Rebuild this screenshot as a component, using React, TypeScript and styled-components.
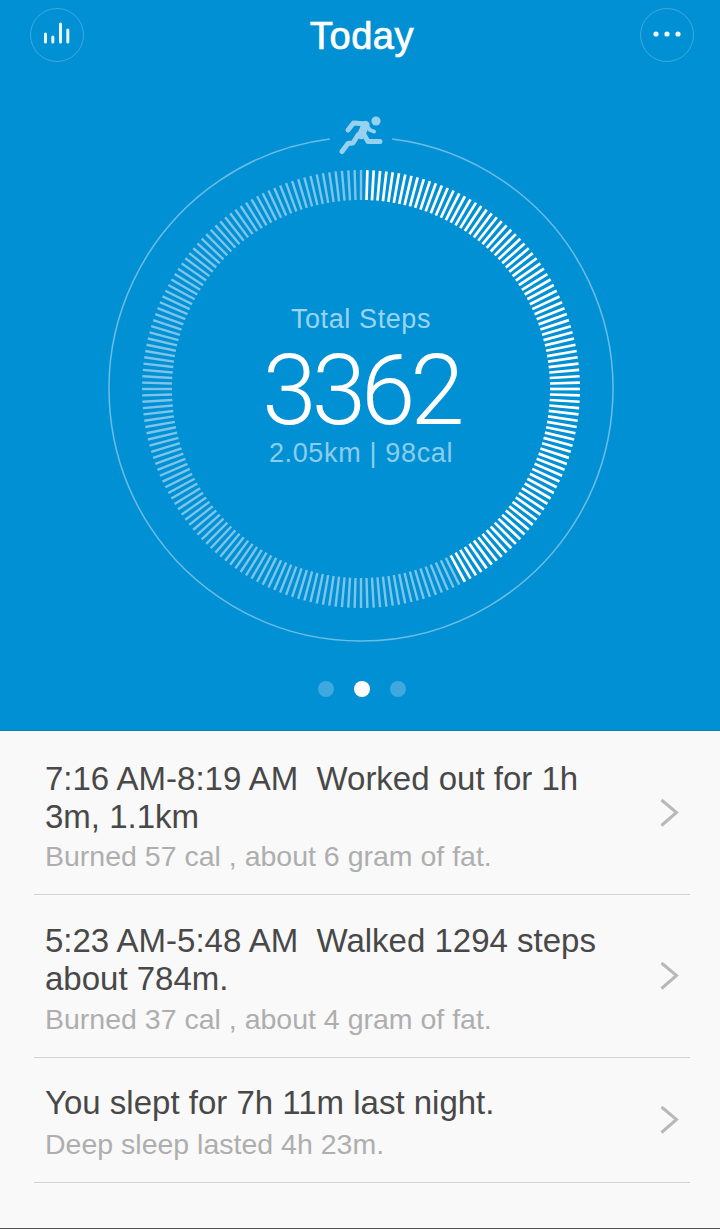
import React from 'react';
import styled, { createGlobalStyle } from 'styled-components';

const GlobalStyle = createGlobalStyle`
  html, body {
    margin: 0;
    padding: 0;
    background: #f9f9f9;
    font-family: 'Liberation Sans', Arial, sans-serif;
  }
`;

const Page = styled.div`
  width: 720px;
  height: 1229px;
  display: flex;
  flex-direction: column;
  background: #f9f9f9;
  border-bottom: 1px solid #555;
  box-sizing: border-box;
  overflow: hidden;
`;

const Hero = styled.section`
  background: #0290d4;
  display: flex;
  flex-direction: column;
  align-items: center;
  height: 731px;
  padding: 8px 26px 0 30px;
  box-sizing: border-box;
  border-bottom: 1px solid #0a7fb8;
`;

const TopBar = styled.header`
  align-self: stretch;
  display: flex;
  align-items: center;
  justify-content: space-between;
  height: 54px;
`;

const RoundButton = styled.button`
  width: 54px;
  height: 54px;
  padding: 0;
  border-radius: 50%;
  border: 1px solid #3fa9df;
  background: transparent;
  display: flex;
  align-items: center;
  justify-content: center;
`;

const Title = styled.h1`
  margin: 2px 0 0;
  color: #fff;
  font-size: 38px;
  font-weight: 400;
  line-height: 54px;
  letter-spacing: 0.6px;
  -webkit-text-stroke: 0.7px #fff;
`;

const Gauge = styled.div`
  position: relative;
  width: 560px;
  height: 560px;
  margin-top: 47px;
  margin-left: -2px;
  flex: none;
`;

const Readout = styled.div`
  position: absolute;
  left: 0;
  right: 0;
  top: 192px;
  display: flex;
  flex-direction: column;
  align-items: center;
`;

const Label = styled.div`
  color: #9ad4f1;
  font-size: 27px;
  line-height: 36px;
  letter-spacing: 0.6px;
`;

const Steps = styled.div`
  color: #fff;
  font-family: Roboto, sans-serif;
  font-weight: 300;
  font-size: 98px;
  line-height: 92px;
  margin: 8px 0 -2px;
  letter-spacing: -5px;
`;

const Distance = styled.div`
  color: #8ccdee;
  font-size: 27px;
  line-height: 36px;
  letter-spacing: 0.65px;
`;

const Pager = styled.div`
  display: flex;
  gap: 20px;
  margin-top: 12px;
`;

const Dot = styled.span<{ $active?: boolean }>`
  width: 16px;
  height: 16px;
  border-radius: 50%;
  background: ${({ $active }) => ($active ? '#fff' : '#3fa9df')};
`;

const List = styled.ul`
  list-style: none;
  margin: 0;
  padding: 0 30px 0 34px;
`;

const Row = styled.li`
  display: flex;
  align-items: center;
  justify-content: space-between;
  padding: 0 11px 0 11px;
  border-bottom: 1.5px solid #d2d2d2;
`;

const RowText = styled.div<{ $top: number; $bottom: number }>`
  width: 570px;
  padding: ${({ $top, $bottom }) => `${$top}px 0 ${$bottom}px`};
`;

const Headline = styled.div`
  color: #484848;
  font-size: 33px;
  line-height: 38px;
  white-space: pre-wrap;
`;

const Detail = styled.div<{ $gap: number }>`
  color: #aeaeae;
  font-size: 28.5px;
  line-height: 40px;
  margin-top: ${({ $gap }) => $gap}px;
`;

const CENTER = 280;
const TICK_COUNT = 216;
const ACTIVE_UNTIL = 152;

const ticks = Array.from({ length: TICK_COUNT }, (_, i) => {
  const deg = i * (360 / TICK_COUNT);
  const rad = (deg * Math.PI) / 180;
  const sin = Math.sin(rad);
  const cos = Math.cos(rad);
  return {
    deg,
    active: deg > 0 && deg < ACTIVE_UNTIL,
    x1: CENTER + 189 * sin,
    y1: CENTER - 189 * cos,
    x2: CENTER + 219 * sin,
    y2: CENTER - 219 * cos,
  };
});

const gapX = 252 * Math.sin((7.1 * Math.PI) / 180);
const gapY = 252 * Math.cos((7.1 * Math.PI) / 180);

const BarsIcon = () => (
  <svg width="28" height="26" viewBox="0 0 28 26" fill="none" stroke="#eaf7fd" strokeWidth="3" strokeLinecap="round">
    <path d="M2.5 12v8M9.8 15v5M17.5 2v18M24.8 8v12" />
  </svg>
);

const DotsIcon = () => (
  <svg width="28" height="8" viewBox="0 0 28 8" fill="#eef8fd">
    <circle cx="3" cy="3" r="2.6" />
    <circle cx="14" cy="3" r="2.6" />
    <circle cx="25" cy="3" r="2.6" />
  </svg>
);

const Chevron = () => (
  <svg width="20" height="30" viewBox="0 0 20 30" fill="none" stroke="#b8b8b8" strokeWidth="3">
    <path d="M2.5 2 17.5 14.5 2.5 27.5" />
  </svg>
);

const RingArt = () => (
  <svg width="560" height="560" viewBox="0 0 560 560">
    <path
      d={`M${CENTER - gapX} ${CENTER - gapY}A252 252 0 1 0 ${CENTER + gapX} ${CENTER - gapY}`}
      fill="none"
      stroke="#6bbde6"
      strokeWidth="1.5"
    />
    {ticks.map(t => (
      <line
        key={t.deg}
        x1={t.x1}
        y1={t.y1}
        x2={t.x2}
        y2={t.y2}
        stroke={t.active ? '#fff' : '#7cc4e9'}
        strokeWidth={t.active ? 2.7 : 2.4}
      />
    ))}
    {/* runner, sits in the gap of the outer ring */}
    <g transform="translate(-80 -109)" fill="none" stroke="#96d1ef" strokeLinecap="round" strokeLinejoin="round">
      <circle cx="375" cy="121" r="4.6" fill="#96d1ef" stroke="none" />
      <path d="M347 130 352.5 123 365 124" strokeWidth="5" />
      <path d="M365 125 369 130 373 131.5" strokeWidth="4" />
      <path d="M364.5 125 360 135" strokeWidth="8" />
      <path d="M362 133 367 141.5 379 141.5" strokeWidth="5" />
      <path d="M357 135 352 143 347 143.5 341 151.5" strokeWidth="5" />
    </g>
  </svg>
);

const rows = [
  {
    top: 29,
    bottom: 18,
    gap: 0,
    headline: '7:16 AM-8:19 AM  Worked out for 1h 3m, 1.1km',
    detail: 'Burned 57 cal , about 6 gram of fat.',
  },
  {
    top: 27,
    bottom: 18,
    gap: 1,
    headline: '5:23 AM-5:48 AM  Walked 1294 steps about 784m.',
    detail: 'Burned 37 cal , about 4 gram of fat.',
  },
  {
    top: 26,
    bottom: 18,
    gap: 2,
    headline: 'You slept for 7h 11m last night.',
    detail: 'Deep sleep lasted 4h 23m.',
  },
];

const App: React.FC = () => (
  <Page>
    <GlobalStyle />
    <Hero>
      <TopBar>
        <RoundButton aria-label="Stats">
          <BarsIcon />
        </RoundButton>
        <Title>Today</Title>
        <RoundButton aria-label="More">
          <DotsIcon />
        </RoundButton>
      </TopBar>
      <Gauge>
        <RingArt />
        <Readout>
          <Label>Total Steps</Label>
          <Steps>3362</Steps>
          <Distance>2.05km | 98cal</Distance>
        </Readout>
      </Gauge>
      <Pager>
        <Dot />
        <Dot $active />
        <Dot />
      </Pager>
    </Hero>
    <List>
      {rows.map(row => (
        <Row key={row.detail}>
          <RowText $top={row.top} $bottom={row.bottom}>
            <Headline>{row.headline}</Headline>
            <Detail $gap={row.gap}>{row.detail}</Detail>
          </RowText>
          <Chevron />
        </Row>
      ))}
    </List>
  </Page>
);

export default App;
